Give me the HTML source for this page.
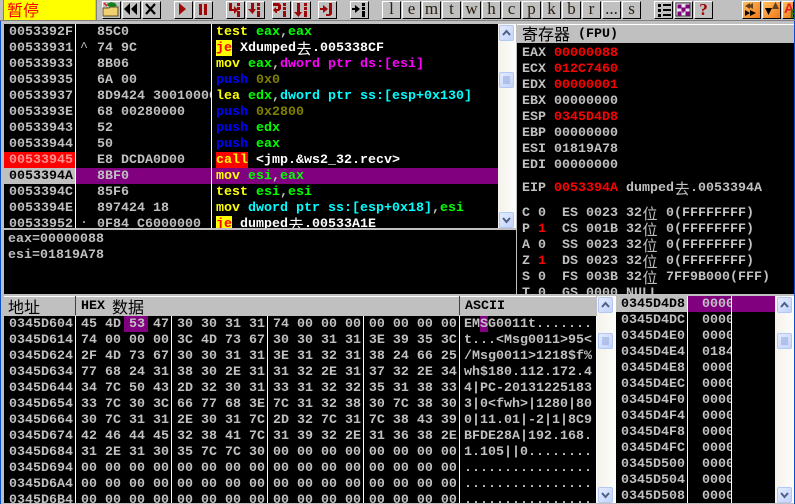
<!DOCTYPE html>
<html><head><meta charset="utf-8"><style>
html,body{margin:0;padding:0;background:#c0c0c0}
#r{position:relative;width:795px;height:504px;overflow:hidden;background:#c0c0c0;font:bold 13.33px/16px "Liberation Mono","Noto Sans CJK SC",monospace;color:#c0c0c0}
.a{position:absolute}
.k{position:absolute;background:#000;overflow:hidden}
pre{position:absolute;margin:0;font:inherit;line-height:16px;white-space:pre}
.z{display:inline-block;width:16px;height:16px;font:normal 15px/16px "Noto Sans CJK SC","WenQuanYi Zen Hei",sans-serif;vertical-align:top;text-align:center}
.b{position:absolute;top:1px;width:19px;height:18px;box-sizing:border-box;background:#c0c0c0;border:1px solid;border-color:#fff #000 #000 #fff;text-align:center;font:normal 17px/14px "Liberation Serif",serif;color:#2a2010}
.y{color:#ff0}.g{color:#0f0}.m{color:#f0f}.u{color:#00f}.o{color:#808000}.c{color:#0ff}.w{color:#fff}.r{color:#f00}
.sb{position:absolute;background:linear-gradient(90deg,#f4f2ea,#fdfdfb);}
.sbt{position:absolute;left:1px;width:15px;height:16px;box-sizing:border-box;background:linear-gradient(135deg,#e3ebff,#c3d3fb);border:1px solid #b4c8f6;border-radius:2px}
.sbt svg{position:absolute;left:0;top:0}
.hd{position:absolute;background:#c0c0c0;color:#000;border-top:1px solid #fff;height:18px}
</style></head><body><div id="r">

<div class="a" style="left:0;top:21px;width:1px;height:483px;background:#0a4fc8"></div>
<div class="a" style="left:794px;top:0;width:1px;height:504px;background:#0a4fc8"></div>

<div class="a" style="left:0;top:20px;width:795px;height:1px;background:#808080"></div>
<div class="a" style="left:3px;top:0;width:92px;height:20px;background:#ff0;color:#f00;border-left:1px solid #808080;box-sizing:border-box;font:normal 16px/19px 'Noto Sans CJK SC',sans-serif;padding-left:3px">暂停</div>
<div class="a" style="left:96px;top:0;width:1px;height:20px;background:#808080"></div>

<div class="b" style="left:102px"></div><div class="b" style="left:122px"></div><div class="b" style="left:142px"></div>
<div class="b" style="left:174px"></div><div class="b" style="left:194px"></div>
<div class="b" style="left:226px"></div><div class="b" style="left:246px"></div><div class="b" style="left:272px"></div><div class="b" style="left:292px"></div><div class="b" style="left:318px"></div>
<div class="b" style="left:350px"></div>
<div class="b" style="left:382px">l</div><div class="b" style="left:402px">e</div><div class="b" style="left:422px">m</div><div class="b" style="left:442px">t</div><div class="b" style="left:462px">w</div><div class="b" style="left:482px">h</div><div class="b" style="left:502px">c</div><div class="b" style="left:522px">p</div><div class="b" style="left:542px">k</div><div class="b" style="left:562px">b</div><div class="b" style="left:582px">r</div><div class="b" style="left:602px">...</div><div class="b" style="left:622px">s</div>
<div class="b" style="left:654px"></div><div class="b" style="left:674px"></div><div class="b" style="left:694px;color:#a00000;font:bold 17px/15px 'Liberation Serif',serif">?</div>
<div class="b" style="left:742px;background:linear-gradient(135deg,#ffc060,#f07818)"></div>
<div class="b" style="left:762px;background:linear-gradient(135deg,#ffc060,#f07818)"></div>
<div class="b" style="left:782px;width:12px;background:linear-gradient(135deg,#ffc060,#f07818)"></div>

<svg class="a" style="left:0;top:0" width="795" height="21" viewBox="0 0 795 21">
<path d="M103 8h6l1-1h8v9h-15z" fill="#f0d070" stroke="#605020"/>
<path d="M107 4l4-2 4 1 2 3-6 1-3-1z" fill="#108020"/><path d="M104 3l3 3" stroke="#d02020" stroke-width="1.5"/>
<path d="M124 9l6-6v12zM131 9l6-6v12z" fill="#000"/>
<path d="M146 4l9 10M155 4l-9 10" stroke="#000" stroke-width="2.2"/>
<g fill="#9c0808">
<path d="M179 3l7 6-7 6z"/>
<path d="M199 4h3v11h-3zM204 4h3v11h-3z"/>
<path d="M229 3h3v6h2v-3l4 4-4 4v-3h-5z"/><path d="M237 3h3v3h-3zM237 7h3v3h-3zM237 11h3v3h-3zM237 14h3v3h-3z"/>
<path d="M251 3h3v6h2l-3.500 5-4.500-5h3z"/><path d="M257 3h3v3h-3zM257 7h3v3h-3zM257 11h3v3h-3zM257 14h3v3h-3z"/>
<path d="M273 3h6l2 2v4l-2 2h-2v2h-1l-3-3 3-3v2h2V6h-5z"/><path d="M283 3h3v3h-3zM283 7h3v3h-3zM283 11h3v3h-3zM283 14h3v3h-3z"/>
<path d="M297 3h3v9h2l-3.500 5-4.500-5h3z"/><path d="M304 3h3v3h-3zM304 7h3v3h-3zM304 11h3v3h-3zM304 14h3v3h-3z"/>
<path d="M320 8h3V5l5 4-5 4v-3h-3zM329 3h3v11l-2 2h-4v-2h3z"/>
</g>
<g fill="#000">
<path d="M352 8h3V5l5 4-5 4v-3h-3z"/><path d="M362 3h3v3h-3zM362 7h3v3h-3zM362 11h3v3h-3zM362 14h3v3h-3z"/>
<path d="M658 4h3v3h-3zM658 9h3v3h-3zM658 14h3v3h-3zM663 4h8v2h-8zM663 9h8v2h-8zM663 14h8v2h-8z"/>
</g>
<rect x="676" y="3" width="14" height="13" fill="#e8e8e8" stroke="#404040"/>
<path d="M678 5h3v3h-3zM686 5h3v3h-3zM682 8h3v3h-3zM678 12h3v3h-3zM686 12h3v3h-3zM680 7l3 2M687 7l-3 2M683 11v2" fill="#800080" stroke="#800080"/>
<path d="M750 3v6l-5-3zM753 3v6l-5-3z" fill="#604020"/><path d="M745 10l5 3-5 3zM750 10l6 3-6 3z" fill="#000"/>
<path d="M765 8h7l-3.500 7z" fill="#000"/><path d="M772 9l3.500-7 3.500 7z" fill="#604020"/>
<text x="784" y="13" font-family="Liberation Sans" font-weight="bold" font-size="14" fill="#e02020">A</text>
<text x="790" y="18" font-family="Liberation Sans" font-weight="bold" font-size="12" fill="#108020">B</text>
</svg>

<!-- disassembly -->
<div class="k" style="left:4px;top:24px;width:494px;height:204px">
  <div class="a" style="left:0;top:128px;width:71px;height:16px;background:#f00"></div>
  <div class="a" style="left:0;top:144px;width:71px;height:16px;background:#c0c0c0"></div>
  <div class="a" style="left:72px;top:144px;width:422px;height:16px;background:#800080"></div>
  <div class="a" style="left:71px;top:0;width:1px;height:204px;background:#fff"></div>
  <div class="a" style="left:207px;top:0;width:1px;height:204px;background:#fff"></div>
  <pre style="left:5px;top:1px">0053392F
00533931
00533933
00533935
00533937
0053393E
00533943
00533944
<span style="color:#ff9090">00533945</span>
<span style="color:#000">0053394A</span>
0053394C
0053394E
00533952</pre>
  <pre style="left:76px;top:17px;font-weight:normal">^</pre>
  <pre style="left:76px;top:189px;font-weight:normal">.</pre>
  <div class="a" style="left:72px;top:0;width:135px;height:204px;overflow:hidden"><pre style="left:21px;top:1px">85C0
74 9C
8B06
6A 00
8D9424 30010000
68 00280000
52
50
E8 DCDA0D00
8BF0
85F6
897424 18
0F84 C6000000</pre></div>
  <div class="a" style="left:212px;top:16px;width:16px;height:16px;background:#ff0"></div>
  <div class="a" style="left:212px;top:128px;width:32px;height:16px;background:#f00"></div>
  <div class="a" style="left:212px;top:192px;width:16px;height:16px;background:#ff0"></div>
  <pre style="left:212px;top:1px"><span class="y">test</span> <span class="g">eax</span>,<span class="g">eax</span>
<span class="r">je</span> <span class="w">Xdumped<span class="z">去</span>.005338CF</span>
<span class="y">mov</span> <span class="g">eax</span>,<span class="m">dword ptr ds:[esi]</span>
<span class="u">push</span> <span class="o">0x0</span>
<span class="y">lea</span> <span class="g">edx</span>,<span class="c">dword ptr ss:[esp+0x130]</span>
<span class="u">push</span> <span class="o">0x2800</span>
<span class="u">push</span> <span class="g">edx</span>
<span class="u">push</span> <span class="g">eax</span>
<span class="y">call</span> <span class="w">&lt;jmp.&amp;ws2_32.recv&gt;</span>
<span class="y">mov</span> <span class="g">esi</span>,<span class="g">eax</span>
<span class="y">test</span> <span class="g">esi</span>,<span class="g">esi</span>
<span class="y">mov</span> <span class="c">dword ptr ss:[esp+0x18]</span>,<span class="g">esi</span>
<span class="r">je</span> <span class="w">dumped<span class="z">去</span>.00533A1E</span></pre>
</div>

<!-- disasm scrollbar -->
<div class="sb" style="left:498px;top:24px;width:18px;height:204px">
  <div class="sbt" style="top:1px"><svg width="13" height="14"><path d="M3 9l3.500-4 3.500 4" fill="none" stroke="#4d6185" stroke-width="2"/></svg></div>
  <div class="sbt" style="top:48px"><svg width="13" height="14"><path d="M3 4h7M3 6h7M3 8h7M3 10h7" stroke="#8ea4d8"/></svg></div>
  <div class="sbt" style="top:188px"><svg width="13" height="14"><path d="M3 5l3.500 4 3.500-4" fill="none" stroke="#4d6185" stroke-width="2"/></svg></div>
</div>

<!-- info pane -->
<div class="k" style="left:4px;top:230px;width:512px;height:64px"><pre style="left:4px;top:2px">eax=00000088
esi=01819A78</pre></div>

<!-- registers -->
<div class="hd" style="left:517px;top:24px;width:277px;height:18px;line-height:18px"><span class="a" style="left:5px;top:-1px;white-space:pre;font:normal 16px/18px 'Noto Sans CJK SC',sans-serif">寄存器</span><span class="a" style="left:61px;top:1px;white-space:pre">(FPU)</span></div>
<div class="k" style="left:517px;top:43px;width:277px;height:251px">
<pre style="left:5px;top:1px;margin-top:2px">EAX <span class="r">00000088</span>
ECX <span class="r">012C7460</span>
EDX <span class="r">00000001</span>
EBX 00000000
ESP <span class="r">0345D4D8</span>
EBP 00000000
ESI 01819A78
EDI 00000000</pre>
<pre style="left:5px;top:138px">EIP <span class="r">0053394A</span> dumped<span class="z">去</span>.0053394A</pre>
<pre style="left:5px;top:163px">C 0  ES 0023 32<span class="z">位</span> 0(FFFFFFFF)
P <span class="r">1</span>  CS 001B 32<span class="z">位</span> 0(FFFFFFFF)
A 0  SS 0023 32<span class="z">位</span> 0(FFFFFFFF)
Z <span class="r">1</span>  DS 0023 32<span class="z">位</span> 0(FFFFFFFF)
S 0  FS 003B 32<span class="z">位</span> 7FF9B000(FFF)
T 0  GS 0000 NULL</pre>
</div>

<!-- dump header -->
<div class="hd" style="left:4px;top:296px;width:71px;line-height:18px;font:normal 16px/18px 'Noto Sans CJK SC',sans-serif;padding-left:0"><span style="margin-left:4px">地址</span></div>
<div class="a" style="left:75px;top:296px;width:1px;height:19px;background:#404040"></div>
<div class="hd" style="left:76px;top:296px;width:383px;line-height:18px"><span class="a" style="left:5px;top:1px;white-space:pre">HEX</span><span class="a" style="left:36px;top:0;white-space:pre;font:normal 16px/18px 'Noto Sans CJK SC',sans-serif">数据</span></div>
<div class="a" style="left:459px;top:296px;width:1px;height:19px;background:#404040"></div>
<div class="hd" style="left:460px;top:296px;width:136px;line-height:18px"><span class="a" style="left:5px;top:1px">ASCII</span></div>

<!-- dump -->
<div class="k" style="left:4px;top:316px;width:593px;height:187px">
  <div class="a" style="left:120px;top:0;width:24px;height:16px;background:#800080"></div>
  <div class="a" style="left:476px;top:0;width:8px;height:16px;background:#800080"></div>
  <div class="a" style="left:71px;top:0;width:1px;height:187px;background:#fff"></div>
  <div class="a" style="left:167px;top:0;width:1px;height:187px;background:#fff"></div>
  <div class="a" style="left:263px;top:0;width:1px;height:187px;background:#fff"></div>
  <div class="a" style="left:359px;top:0;width:1px;height:187px;background:#fff"></div>
  <div class="a" style="left:455px;top:0;width:1px;height:187px;background:#fff"></div>
  <div class="a" style="left:592px;top:0;width:1px;height:187px;background:#fff"></div>
<pre style="left:5px;top:1px">0345D604
0345D614
0345D624
0345D634
0345D644
0345D654
0345D664
0345D674
0345D684
0345D694
0345D6A4
0345D6B4</pre>
<pre style="left:77px;top:1px">45 4D 53 47 30 30 31 31 74 00 00 00 00 00 00 00
74 00 00 00 3C 4D 73 67 30 30 31 31 3E 39 35 3C
2F 4D 73 67 30 30 31 31 3E 31 32 31 38 24 66 25
77 68 24 31 38 30 2E 31 31 32 2E 31 37 32 2E 34
34 7C 50 43 2D 32 30 31 33 31 32 32 35 31 38 33
33 7C 30 3C 66 77 68 3E 7C 31 32 38 30 7C 38 30
30 7C 31 31 2E 30 31 7C 2D 32 7C 31 7C 38 43 39
42 46 44 45 32 38 41 7C 31 39 32 2E 31 36 38 2E
31 2E 31 30 35 7C 7C 30 00 00 00 00 00 00 00 00
00 00 00 00 00 00 00 00 00 00 00 00 00 00 00 00
00 00 00 00 00 00 00 00 00 00 00 00 00 00 00 00
00 00 00 00 00 00 00 00 00 00 00 00 00 00 00 00</pre>
<pre style="left:460px;top:1px">EMSG0011t.......
t...&lt;Msg0011&gt;95&lt;
/Msg0011&gt;1218$f%
wh$180.112.172.4
4|PC-20131225183
3|0&lt;fwh&gt;|1280|80
0|11.01|-2|1|8C9
BFDE28A|192.168.
1.105||0........
................
................
................</pre>
</div>

<!-- dump scrollbar -->
<div class="sb" style="left:597px;top:296px;width:19px;height:207px">
  <div class="sbt" style="top:1px"><svg width="13" height="14"><path d="M3 9l3.500-4 3.500 4" fill="none" stroke="#4d6185" stroke-width="2"/></svg></div>
  <div class="sbt" style="top:37px"><svg width="13" height="14"><path d="M3 4h7M3 6h7M3 8h7M3 10h7" stroke="#8ea4d8"/></svg></div>
  <div class="sbt" style="top:191px"><svg width="13" height="14"><path d="M3 5l3.500 4 3.500-4" fill="none" stroke="#4d6185" stroke-width="2"/></svg></div>
</div>

<!-- stack -->
<div class="k" style="left:616px;top:296px;width:159px;height:207px">
  <div class="a" style="left:0;top:0;width:71px;height:16px;background:#c0c0c0"></div>
  <div class="a" style="left:72px;top:0;width:87px;height:16px;background:#800080"></div>
  <pre style="left:5px;top:1px"><span style="color:#000">0345D4D8</span>
0345D4DC
0345D4E0
0345D4E4
0345D4E8
0345D4EC
0345D4F0
0345D4F4
0345D4F8
0345D4FC
0345D500
0345D504
0345D508</pre>
  <div class="a" style="left:72px;top:0;width:43px;height:207px;overflow:hidden"><pre style="left:14px;top:1px">00000000
00000000
00000000
01842DA0
00000000
00000000
00000000
00000000
00000000
00000000
00000000
00000000
00000000</pre></div>
  <div class="a" style="left:71px;top:0;width:1px;height:207px;background:#fff"></div>
  <div class="a" style="left:115px;top:0;width:1px;height:207px;background:#fff"></div>
</div>

<!-- stack scrollbar -->
<div class="sb" style="left:775px;top:296px;width:19px;height:207px">
  <div class="sbt" style="top:1px;left:2px"><svg width="13" height="14"><path d="M3 9l3.500-4 3.500 4" fill="none" stroke="#4d6185" stroke-width="2"/></svg></div>
  <div class="sbt" style="top:37px;left:2px"><svg width="13" height="14"><path d="M3 4h7M3 6h7M3 8h7M3 10h7" stroke="#8ea4d8"/></svg></div>
  <div class="sbt" style="top:191px;left:2px"><svg width="13" height="14"><path d="M3 5l3.500 4 3.500-4" fill="none" stroke="#4d6185" stroke-width="2"/></svg></div>
</div>

</div></body></html>
